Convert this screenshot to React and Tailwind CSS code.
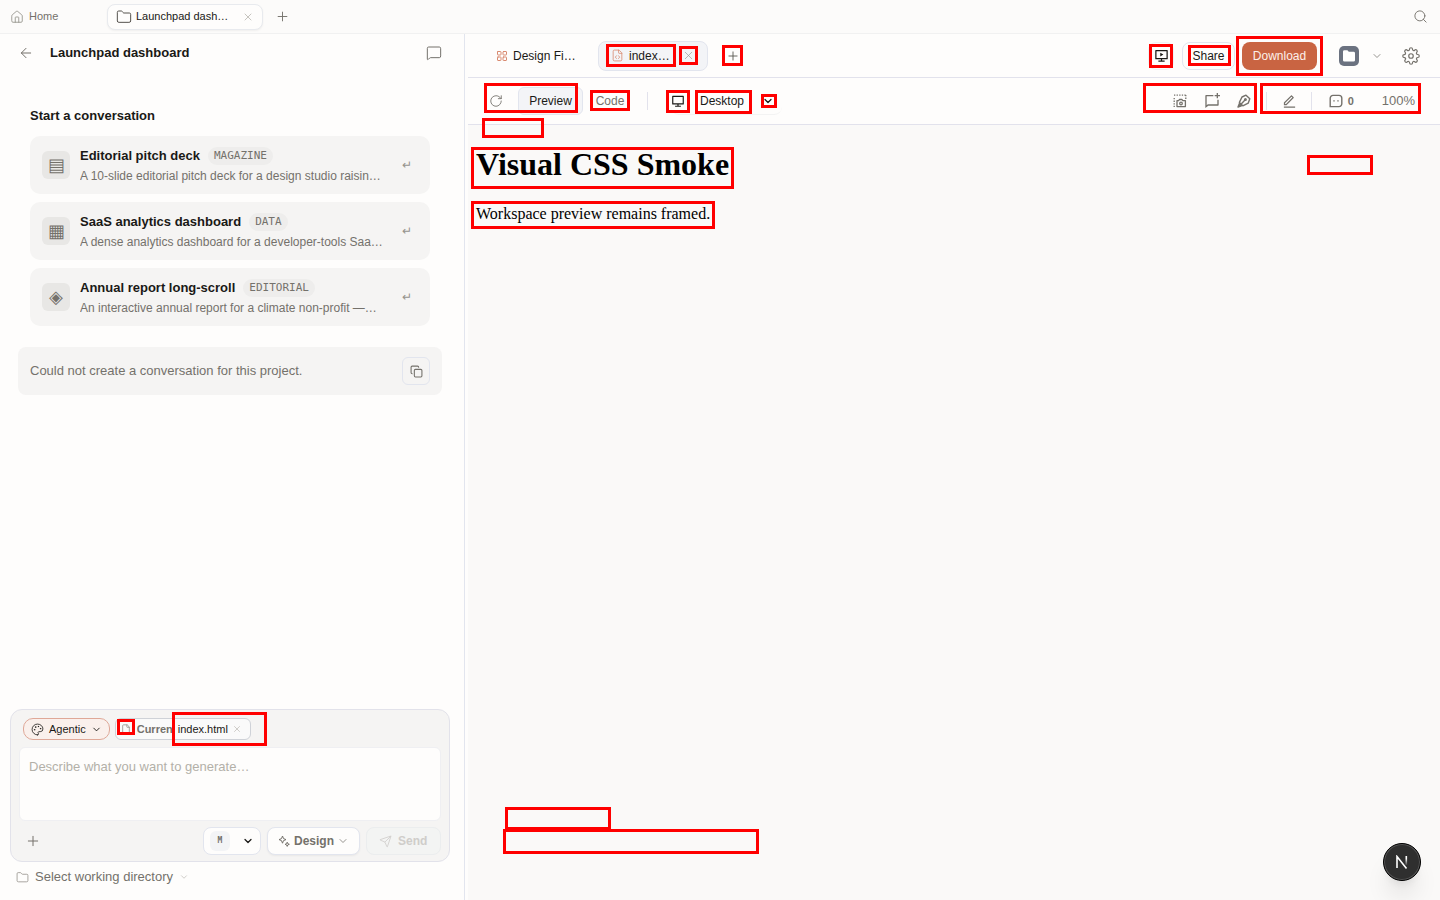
import { useState } from "react";
import {
  ArrowLeft,
  ChevronDown,
  Copy,
  File,
  FileCode,
  Folder,
  House,
  LayoutGrid,
  MessageSquare,
  Palette,
  Plus,
  RotateCw,
  Search,
  Send,
  X,
} from "lucide-react";
import { RiChatNewLine, RiComputerLine, RiEditLine, RiSlideshow3Line } from "react-icons/ri";

const starters = [
  {
    glyph: "▤",
    title: "Editorial pitch deck",
    tag: "MAGAZINE",
    text: "A 10-slide editorial pitch deck for a design studio raising its first fund",
  },
  {
    glyph: "▦",
    title: "SaaS analytics dashboard",
    tag: "DATA",
    text: "A dense analytics dashboard for a developer-tools SaaS product",
  },
  {
    glyph: "◈",
    title: "Annual report long-scroll",
    tag: "EDITORIAL",
    text: "An interactive annual report for a climate non-profit —…",
  },
];

const outlines = [
  "left-[606px] top-[44px] w-[70px] h-[23px]",
  "left-[679px] top-[46px] w-[19px] h-[19px]",
  "left-[722px] top-[45px] w-[21px] h-[21px]",
  "left-[484px] top-[83px] w-[94px] h-[30px]",
  "left-[590px] top-[90px] w-[40px] h-[21px]",
  "left-[482px] top-[118px] w-[62px] h-[20px]",
  "left-[666px] top-[90px] w-[24px] h-[23px]",
  "left-[695px] top-[90px] w-[57px] h-[24px]",
  "left-[761px] top-[94px] w-[16px] h-[14px]",
  "left-[1149px] top-[44px] w-[24px] h-[24px]",
  "left-[1188px] top-[45px] w-[43px] h-[21px]",
  "left-[1236px] top-[36px] w-[87px] h-[40px]",
  "left-[1143px] top-[83px] w-[114px] h-[30px]",
  "left-[1260px] top-[83px] w-[161px] h-[31px]",
  "left-[1307px] top-[155px] w-[66px] h-[20px]",
  "left-[471px] top-[147px] w-[263px] h-[42px]",
  "left-[471px] top-[201px] w-[244px] h-[28px]",
  "left-[505px] top-[807px] w-[106px] h-[23px]",
  "left-[503px] top-[829px] w-[256px] h-[25px]",
  "left-[117px] top-[719px] w-[18px] h-[16px]",
  "left-[172px] top-[712px] w-[95px] h-[34px]",
];

const CaptureIcon = () => (
  <svg width="14" height="14" viewBox="0 0 14 14" fill="none" stroke="currentColor" strokeWidth="1.3">
    <path d="M1 1.2h12M1.2 4v9.5M12.8 1v4" strokeDasharray="1.3 1.3" />
    <path d="M4 6.7h1.6l.8-1.2h2.6l.8 1.2h2.6v5.9H4z" strokeLinejoin="round" />
    <circle cx="8" cy="9.5" r="1.3" />
  </svg>
);

const MarkerIcon = () => (
  <svg width="14" height="14" viewBox="0 0 14 14" fill="none" stroke="currentColor" strokeWidth="1.4" strokeLinejoin="round">
    <path d="M9 1.2l3.8 3.6-1.6 4.4-5.4 2.6-3.4-3.400 2.600-5.400z" />
    <path d="M4.200 10L8.200 5.800" />
    <circle cx="8.400" cy="5.600" r="0.800" />
    <path d="M2.400 9.600L1 13l3.400-1.200z" fill="currentColor" />
  </svg>
);

const CommentIcon = () => (
  <svg width="14" height="14" viewBox="0 0 14 14" fill="none" stroke="currentColor" strokeWidth="1.4">
    <path d="M1.2 12.6V4.2a2.8 2.8 0 0 1 2.8-2.8h6a2.8 2.8 0 0 1 2.8 2.8v5.6a2.8 2.8 0 0 1-2.8 2.8z" />
    <path d="M4.3 6.9h1.4M8.3 6.9h1.4" />
  </svg>
);

const GearIcon = () => (
  <svg width="18" height="18" viewBox="0 0 24 24" fill="none" stroke="currentColor" strokeWidth="1.6" strokeLinejoin="round">
    <circle cx="12" cy="12" r="3" />
    <path d="M19.4 15a1.65 1.65 0 0 0 .33 1.82l.06.06a2 2 0 0 1-2.83 2.83l-.06-.06a1.65 1.65 0 0 0-1.82-.33 1.65 1.65 0 0 0-1 1.51V21a2 2 0 0 1-4 0v-.09A1.65 1.65 0 0 0 9 19.4a1.65 1.65 0 0 0-1.82.33l-.06.06a2 2 0 0 1-2.83-2.83l.06-.06a1.65 1.65 0 0 0 .33-1.82 1.65 1.65 0 0 0-1.51-1H3a2 2 0 0 1 0-4h.09A1.65 1.65 0 0 0 4.6 9a1.65 1.65 0 0 0-.33-1.82l-.06-.06a2 2 0 0 1 2.83-2.83l.06.06a1.65 1.65 0 0 0 1.82.33H9a1.65 1.65 0 0 0 1-1.51V3a2 2 0 0 1 4 0v.09a1.65 1.65 0 0 0 1 1.51 1.65 1.65 0 0 0 1.82-.33l.06-.06a2 2 0 0 1 2.83 2.83l-.06.06a1.65 1.65 0 0 0-.33 1.82V9a1.65 1.65 0 0 0 1.51 1H21a2 2 0 0 1 0 4h-.09a1.65 1.65 0 0 0-1.51 1z" />
  </svg>
);

const SparkIcon = () => (
  <svg width="12" height="12" viewBox="0 0 12 12" fill="none" stroke="currentColor" strokeWidth="1" strokeLinejoin="round">
    <path d="M4.5 1l1 2.6L8 4.6l-2.5 1-1 2.6-1-2.6L1 4.6l2.5-1z" />
    <path d="M9.2 7.2l.6 1.5 1.5.6-1.5.6-.6 1.5-.6-1.5-1.5-.6 1.5-.6z" />
  </svg>
);

const FolderBadge = () => (
  <span className="flex size-5 items-center justify-center rounded-[5px] bg-[#6b7280]">
    <svg width="14" height="14" viewBox="0 0 14 14" fill="white">
      <path d="M1 2.600A1.400 1.400 0 0 1 2.400 1.200h3l1.400 1.600h4.800A1.400 1.400 0 0 1 13 4.200v7A1.400 1.400 0 0 1 11.600 12.600H2.400A1.400 1.400 0 0 1 1 11.200z" />
    </svg>
  </span>
);

const App = () => {
  const [prompt, setPrompt] = useState("");

  return (
    <div className="relative flex h-screen flex-col overflow-hidden bg-[#fefdfc] font-['Liberation_Sans',Arial,sans-serif] text-[#1a1916]">
      {/* Window tabs */}
      <header className="flex h-[34px] shrink-0 items-center border-b border-[#f1f1f1] bg-[#fcfbfa] pr-3 pl-2.5">
        <a href="#home" className="flex w-[97px] items-center gap-[5px] text-[11px] text-[#74716b]">
          <House size={14} strokeWidth={1.5} className="text-[#96938d]" />
          Home
        </a>
        <div className="flex h-[26px] w-[156px] items-center gap-1 rounded-lg border border-[#e8eaee] bg-[#fefdfc] px-2 shadow-xs">
          <Folder size={16} strokeWidth={1.5} className="shrink-0 text-[#55524d]" />
          <span className="w-[98px] truncate text-[11px]">Launchpad dashboard</span>
          <button aria-label="Close tab" className="ml-auto text-[#b3b0aa]">
            <X size={12} strokeWidth={1.5} />
          </button>
        </div>
        <button aria-label="New tab" className="ml-3 text-[#74716b]">
          <Plus size={15} strokeWidth={1.5} />
        </button>
        <button aria-label="Search" className="ml-auto text-[#74716b]">
          <Search size={15} strokeWidth={1.5} />
        </button>
      </header>

      <div className="flex min-h-0 flex-1">
        {/* Chat side */}
        <aside className="flex w-[465px] shrink-0 flex-col border-r border-[#e2e5ee]">
          <div className="flex h-[38px] shrink-0 items-center px-[18px]">
            <button aria-label="Back" className="text-[#74716b]">
              <ArrowLeft size={16} strokeWidth={1.5} />
            </button>
            <h1 className="ml-4 text-[13px] font-bold">Launchpad dashboard</h1>
            <button aria-label="Conversations" className="mr-1 ml-auto text-[#74716b]">
              <MessageSquare size={16} strokeWidth={1.5} />
            </button>
          </div>

          <div className="flex-1 pt-[34px]">
            <h2 className="mx-[30px] text-[13px] leading-5 font-bold">Start a conversation</h2>
            <div className="mx-[30px] mt-2.5 mr-[34px] flex flex-col gap-2">
              {starters.map((item) => (
                <button
                  key={item.title}
                  className="flex h-[58px] items-center rounded-[10px] bg-[#f5f4f3] px-3 text-left"
                >
                  <span className="flex size-7 shrink-0 items-center justify-center rounded-md bg-[#e8e7e5] text-lg text-[#74716b]">
                    {item.glyph}
                  </span>
                  <span className="ml-2.5 flex min-w-0 flex-col gap-0.5">
                    <span className="flex items-center gap-2">
                      <span className="text-[13px] leading-5 font-bold">{item.title}</span>
                      <span className="rounded-full bg-[#eeedec] px-1.5 font-['DejaVu_Sans_Mono',monospace] text-[11px] leading-[18px] text-[#74716b]">
                        {item.tag}
                      </span>
                    </span>
                    <span className="w-[304px] truncate text-xs text-[#74716b]">{item.text}</span>
                  </span>
                  <span className="mr-1.5 ml-auto text-xs text-[#96938d]">↵</span>
                </button>
              ))}
            </div>

            <div className="mt-[21px] mr-[22px] ml-[18px] flex h-12 items-center justify-between rounded-lg bg-[#f5f4f3] px-3 text-[13px] text-[#74716b]">
              <p>Could not create a conversation for this project.</p>
              <button
                aria-label="Copy message"
                className="flex size-7 items-center justify-center rounded-md border border-[#e2e5ee]"
              >
                <Copy size={13} />
              </button>
            </div>
          </div>

          {/* Composer */}
          <form className="mr-[14px] ml-2.5 flex flex-col rounded-xl border border-[#e2e2ea] bg-[#f5f4f3] px-2 pt-2 pb-1.5">
            <div className="ml-1 flex h-[22px] gap-[5px] text-[11px]">
              <button
                type="button"
                className="flex items-center rounded-[10px] border border-[#dfa898] bg-[#faf0ec] px-[7px]"
              >
                <Palette size={13} strokeWidth={1.5} />
                <span className="mx-[5px]">Agentic</span>
                <ChevronDown size={11} />
              </button>
              <div className="flex w-[136px] items-center rounded-md border border-[#cfd2d8] bg-[#fafafa] px-[5px]">
                <File size={10} className="shrink-0 text-[#96938d]" />
                <span className="ml-1.5 w-[37px] shrink-0 overflow-hidden font-bold text-[#74716b]">Current</span>
                <span className="ml-1">index.html</span>
                <button type="button" aria-label="Remove file" className="ml-auto pr-[3px] text-[#b3b0aa]">
                  <X size={10} strokeWidth={1.5} />
                </button>
              </div>
            </div>
            <textarea
              aria-label="Prompt"
              value={prompt}
              onChange={(e) => setPrompt(e.target.value)}
              placeholder="Describe what you want to generate…"
              className="mt-[7px] h-[74px] resize-none rounded-md border border-[#efeff2] bg-[#fefdfc] px-[9px] py-[9px] text-[13px] leading-5 outline-none placeholder:text-[#b3b0a8]"
            />
            <div className="mt-1.5 flex h-7 items-center gap-1.5 text-xs font-bold">
              <button type="button" aria-label="Attach" className="mr-auto ml-1.5 text-[#74716b]">
                <Plus size={16} strokeWidth={1.5} />
              </button>
              <button
                type="button"
                aria-label="Model"
                className="flex h-7 w-[58px] items-center justify-between rounded-lg border border-[#e2e5ee] bg-[#fefdfc] px-1.5"
              >
                <span className="flex size-5 items-center justify-center rounded-md bg-[#f3f4f6] font-['DejaVu_Sans_Mono',monospace] text-[8px] text-[#74716b]">
                  M
                </span>
                <ChevronDown size={12} strokeWidth={2.5} />
              </button>
              <button
                type="button"
                className="flex h-7 w-[93px] items-center rounded-lg border border-[#e2e5ee] bg-[#fefdfc] px-2.5 text-[#74716b] shadow-xs"
              >
                <SparkIcon />
                <span className="ml-1">Design</span>
                <ChevronDown size={12} strokeWidth={1.5} className="ml-auto" />
              </button>
              <button
                type="button"
                disabled
                className="flex h-7 w-[75px] items-center gap-1.5 rounded-lg border border-[#ebedee] bg-[#f3f4f3] px-3 text-[#cfcdca]"
              >
                <Send size={13} strokeWidth={1.5} />
                Send
              </button>
            </div>
          </form>
          <button className="mt-1 mb-3 ml-4 flex h-[22px] items-center self-start text-[13px] text-[#74716b]">
            <Folder size={13} strokeWidth={1.5} className="text-[#96938d]" />
            <span className="mx-1.5">Select working directory</span>
            <ChevronDown size={10} strokeWidth={1.5} className="text-[#b3b0aa]" />
          </button>
        </aside>

        {/* Workspace */}
        <main className="ml-[3px] flex min-w-0 flex-1 flex-col">
          <div className="flex h-11 shrink-0 items-center border-b border-[#e2e2ec] pr-5 pl-7 text-xs">
            <button className="flex w-[102px] items-center gap-[5px]">
              <LayoutGrid size={12} className="shrink-0 text-[#d98a70]" />
              <span className="w-16 truncate text-left">Design Files</span>
            </button>
            <div className="flex h-[30px] w-[110px] items-center rounded-lg border border-[#e2e5ee] bg-[#f3f4f7] px-3">
              <FileCode size={13} strokeWidth={1.5} className="shrink-0 text-[#d98a70]" />
              <span className="ml-[5px] w-11 truncate">index.html</span>
              <button aria-label="Close index.html" className="ml-auto text-[#96938d]">
                <X size={13} strokeWidth={1.2} />
              </button>
            </div>
            <button aria-label="Open file" className="ml-[18px] text-[#55524d]">
              <Plus size={14} strokeWidth={1.5} />
            </button>
            <button
              aria-label="Present"
              className="ml-auto flex h-7 w-[26px] items-center justify-center rounded-lg border border-[#f0f1f4]"
            >
              <RiSlideshow3Line size={15} />
            </button>
            <button className="ml-2 h-7 w-[53px] rounded-lg border border-[#e2e5ee]">Share</button>
            <button className="ml-[7px] h-7 w-[75px] rounded-lg bg-[#c96442] text-[#fdf0ea]">Download</button>
            <button aria-label="Project menu" className="ml-[22px] flex items-center gap-3 text-[#74716b]">
              <FolderBadge />
              <ChevronDown size={12} strokeWidth={1.5} />
            </button>
            <button aria-label="Settings" className="ml-[19px] text-[#74716b]">
              <GearIcon />
            </button>
          </div>

          <div className="flex h-[47px] shrink-0 items-center border-b border-[#e2e2ec] pr-[25px] pl-[21px] text-xs text-[#74716b]">
            <button aria-label="Reload">
              <RotateCw size={14} strokeWidth={1.5} />
            </button>
            <button className="ml-[15px] h-7 w-[65px] rounded-md border border-[#e2e5ee] bg-[#f3f4f7] text-[#1a1916]">
              Preview
            </button>
            <button className="ml-3 w-[30px] text-center">Code</button>
            <span className="mr-[23px] ml-[22px] h-[18px] w-px bg-[#e2e2ec]" />
            <button className="flex h-7 items-center rounded-lg border-b border-[#f3f3f3] text-[#1a1916]">
              <RiComputerLine size={14} />
              <span className="mr-[18px] ml-[15px]">Desktop</span>
              <ChevronDown size={12} strokeWidth={2.5} className="mr-2" />
            </button>
            <div className="ml-auto flex items-center">
              <button aria-label="Capture">
                <CaptureIcon />
              </button>
              <button aria-label="Add comment" className="ml-[17px]">
                <RiChatNewLine size={16} />
              </button>
              <button aria-label="Draw" className="ml-[17px]">
                <MarkerIcon />
              </button>
              <span className="mr-[15px] ml-[15px] h-[18px] w-px bg-[#e2e2ec]" />
              <button aria-label="Edit">
                <RiEditLine size={15} />
              </button>
              <span className="mr-[17px] ml-3.5 h-[18px] w-px bg-[#e2e2ec]" />
              <button className="flex items-center gap-[5px] text-[11px] font-bold">
                <CommentIcon />0
              </button>
              <button className="ml-7 text-[13px]">100%</button>
            </div>
          </div>

          <div className="min-h-0 flex-1 bg-[#faf9f8] px-2 pt-[21px] font-['Liberation_Serif',serif] text-black">
            <h2 className="text-[32px] leading-9 font-bold">Visual CSS Smoke</h2>
            <p className="mt-[23px] text-base leading-[18px]">Workspace preview remains framed.</p>
          </div>
        </main>
      </div>

      {/* Dev tools badge */}
      <button
        aria-label="Dev tools"
        className="absolute right-[19px] bottom-[19px] flex size-[38px] items-center justify-center rounded-full border border-black bg-[#2f2f2f] shadow-xl ring-1 ring-[#555] ring-inset"
      >
        <svg width="14" height="14" viewBox="0 0 14 14" fill="none" strokeWidth="1.6">
          <defs>
            <linearGradient id="fade" x1="0" y1="0" x2="0" y2="1">
              <stop offset="0.3" stopColor="white" />
              <stop offset="1" stopColor="white" stopOpacity="0.1" />
            </linearGradient>
          </defs>
          <path d="M2 13V1.5L11.5 13.5" stroke="white" />
          <rect x="10.5" y="1" width="1.6" height="9" fill="url(#fade)" />
        </svg>
      </button>

      {/* Region outlines */}
      <div className="pointer-events-none absolute inset-0">
        {outlines.map((box) => (
          <div key={box} className={`absolute border-3 border-[#ff0000] ${box}`} />
        ))}
      </div>
    </div>
  );
};

export default App;
